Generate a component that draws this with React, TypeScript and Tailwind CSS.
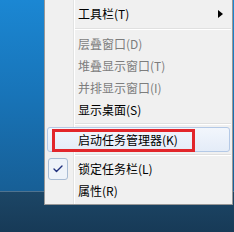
import { Check } from "lucide-react";

interface Item {
  label: string;
  disabled?: boolean;
  submenu?: boolean;
  checked?: boolean;
}

function Row({ label, disabled, submenu, checked }: Item) {
  return (
    <div className="flex h-[22px] items-center">
      <div className="flex h-full w-[33px] shrink-0 items-center">
        {checked && (
          <div className="ml-[3px] flex h-[22px] w-[20px] items-center justify-center rounded-[3px] border border-[#a9bcd3] bg-[#eef3f9]">
            <Check className="h-[12px] w-[12px] text-[#1f2f7c]" strokeWidth={2.75} />
          </div>
        )}
      </div>
      <span className={`flex-1 leading-none ${disabled ? "text-[#7d7d7d]" : "text-black"}`}>{label}</span>
      {submenu && (
        <div className="mr-[9px] h-0 w-0 border-y-[4px] border-l-[5px] border-y-transparent border-l-black" />
      )}
    </div>
  );
}

function Separator({ h, top }: { h: string; top: string }) {
  return (
    <div className={`${h} ml-[30px] mr-[1px] flex flex-col`}>
      <div className={top} />
      <div className="h-px bg-[#e0e0e0]" />
      <div className="h-px bg-white" />
    </div>
  );
}

export default function App() {
  return (
    <div
      className="relative h-[232px] w-[234px] overflow-hidden text-[12px]"
      style={{ fontFamily: '"Noto Sans CJK SC", "Liberation Sans", sans-serif' }}
    >
      {/* desktop */}
      <div className="flex h-full flex-col">
        <div className="h-[191px] bg-gradient-to-b from-[#1b87d3] via-[#1874b8] to-[#175f96]" />
        <div className="flex-1 border-t border-[#4f7390] bg-gradient-to-b from-[#1c4666] to-[#173a57]" />
      </div>

      {/* context menu */}
      <div className="absolute left-[44px] top-0 w-[189px] border-x border-b border-[#979797] bg-[linear-gradient(to_right,#f0f0f0_28px,#e2e3e3_28px,#e2e3e3_29px,#fff_29px,#fff_30px,#f0f0f0_30px)] pt-[3px] pb-px">
        <Row label="工具栏(T)" submenu />
        <Separator h="h-[8px]" top="h-[3px]" />
        <Row label="层叠窗口(D)" disabled />
        <Row label="堆叠显示窗口(T)" disabled />
        <Row label="并排显示窗口(I)" disabled />
        <Row label="显示桌面(S)" />
        <Separator h="h-[6px]" top="h-[2px]" />
        <div className="mx-[2px] flex h-[25px] items-center rounded-[3px] border border-[#b4c9e6] bg-gradient-to-b from-[#f2f6fc] to-[#e4ecf8] pl-[30px]">
          <span className="leading-none text-black">启动任务管理器(K)</span>
        </div>
        <Separator h="h-[6px]" top="h-[2px]" />
        <Row label="锁定任务栏(L)" checked />
        <div className="h-[23px]">
          <Row label="属性(R)" />
        </div>
      </div>

      {/* annotation */}
      <div className="absolute left-[52px] top-[129px] h-[23px] w-[143px] border-[3px] border-[#e2262b]" />
    </div>
  );
}
